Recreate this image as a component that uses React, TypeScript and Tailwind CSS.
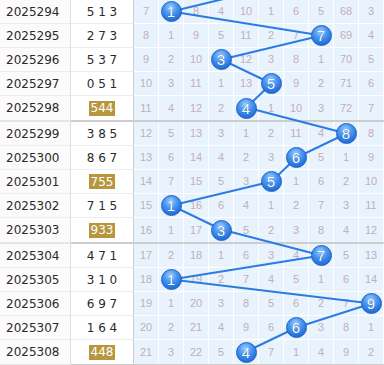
import React from "react";

type Row = { issue: string; num: string; hl?: boolean; ball: number; om: number[] };

const rows: Row[] = [
  { issue: "2025294", num: "5 1 3", ball: 1, om: [7, 1, 8, 4, 10, 1, 6, 5, 68, 3] },
  { issue: "2025295", num: "2 7 3", ball: 7, om: [8, 1, 9, 5, 11, 2, 7, 7, 69, 4] },
  { issue: "2025296", num: "5 3 7", ball: 3, om: [9, 2, 10, 3, 12, 3, 8, 1, 70, 5] },
  { issue: "2025297", num: "0 5 1", ball: 5, om: [10, 3, 11, 1, 13, 5, 9, 2, 71, 6] },
  { issue: "2025298", num: "544", hl: true, ball: 4, om: [11, 4, 12, 2, 4, 1, 10, 3, 72, 7] },
  { issue: "2025299", num: "3 8 5", ball: 8, om: [12, 5, 13, 3, 1, 2, 11, 4, 8, 8] },
  { issue: "2025300", num: "8 6 7", ball: 6, om: [13, 6, 14, 4, 2, 3, 6, 5, 1, 9] },
  { issue: "2025301", num: "755", hl: true, ball: 5, om: [14, 7, 15, 5, 3, 5, 1, 6, 2, 10] },
  { issue: "2025302", num: "7 1 5", ball: 1, om: [15, 1, 16, 6, 4, 1, 2, 7, 3, 11] },
  { issue: "2025303", num: "933", hl: true, ball: 3, om: [16, 1, 17, 3, 5, 2, 3, 8, 4, 12] },
  { issue: "2025304", num: "4 7 1", ball: 7, om: [17, 2, 18, 1, 6, 3, 4, 7, 5, 13] },
  { issue: "2025305", num: "3 1 0", ball: 1, om: [18, 1, 19, 2, 7, 4, 5, 1, 6, 14] },
  { issue: "2025306", num: "6 9 7", ball: 9, om: [19, 1, 20, 3, 8, 5, 6, 2, 7, 9] },
  { issue: "2025307", num: "1 6 4", ball: 6, om: [20, 2, 21, 4, 9, 6, 6, 3, 8, 1] },
  { issue: "2025308", num: "448", hl: true, ball: 4, om: [21, 3, 22, 5, 4, 7, 1, 4, 9, 2] },
];

const cx = (col: number) => 134 + col * 25 + 12.5;
const cy = (i: number) => Math.floor(i / 5) * 122 + (i % 5) * 24 + 11.5;

function Ball({ n }: { n: number }) {
  return (
    <div className="relative z-20 w-[21px] h-[21px] rounded-full border border-[#1c5fc4] bg-[radial-gradient(circle_at_45%_30%,#a9d3ff_0%,#4d9af2_35%,#2673de_70%,#1b5fc6_100%)] flex items-center justify-center text-white text-[15px] leading-none [font-family:'Liberation_Sans',Arial,sans-serif] [text-shadow:0_0_1px_#1a4fa0]">
      {n}
    </div>
  );
}

function RowView({ r, last }: { r: Row; last: boolean }) {
  return (
    <div className="flex h-6">
      <div className={`w-[70px] shrink-0 flex items-center pl-[6px] bg-[#fbfbfb] text-[12px] text-[#2a2a2a] [font-family:'DejaVu_Sans',Verdana,sans-serif] ${last ? "" : "border-b border-[#ededed]"}`}>
        {r.issue}
      </div>
      <div className="w-px shrink-0 bg-[#dcdcdc]" />
      <div className={`w-[62px] shrink-0 flex items-center justify-center bg-white text-[12px] text-[#2a2a2a] [font-family:'DejaVu_Sans',Verdana,sans-serif] whitespace-pre ${last ? "" : "border-b border-[#ededed]"}`}>
        {r.hl ? (
          <span className="bg-[#b8963e] text-white px-[2px] h-[15px] flex items-center leading-none">{r.num}</span>
        ) : (
          r.num
        )}
      </div>
      <div className="w-px shrink-0 bg-[#cfcfcf]" />
      <div className="flex">
        {r.om.map((v, c) => (
          <div
            key={c}
            className={`w-[25px] shrink-0 flex items-center justify-center bg-[#e9f3fd] border-r border-white text-[11px] text-[#c4aeb7] [font-family:'Liberation_Sans',Arial,sans-serif] ${last ? "" : "border-b"}`}
          >
            {c === r.ball ? <Ball n={r.ball} /> : v}
          </div>
        ))}
      </div>
    </div>
  );
}

export default function App() {
  const pts = rows.map((r, i) => `${cx(r.ball)},${cy(i)}`);
  const allPts = [`${cx(5)},-12.5`, ...pts].join(" ");
  const groups = [rows.slice(0, 5), rows.slice(5, 10), rows.slice(10, 15)];
  return (
    <div className="relative w-[384px] h-[365px] overflow-hidden bg-white">
      {groups.map((g, gi) => (
        <div key={gi}>
          {g.map((r, ri) => (
            <RowView key={r.issue} r={r} last={ri === 4} />
          ))}
          <div className="flex h-[2px]">
            <div className="w-[71px] bg-[#e6e6e6]" />
            <div className="flex-1 bg-[#cdcdcd]" />
          </div>
        </div>
      ))}
      <svg className="absolute left-0 top-0 z-10 pointer-events-none" width={384} height={366}>
        <polyline points={allPts} fill="none" stroke="#2a7ce4" strokeWidth={2} strokeLinejoin="round" />
      </svg>
    </div>
  );
}
